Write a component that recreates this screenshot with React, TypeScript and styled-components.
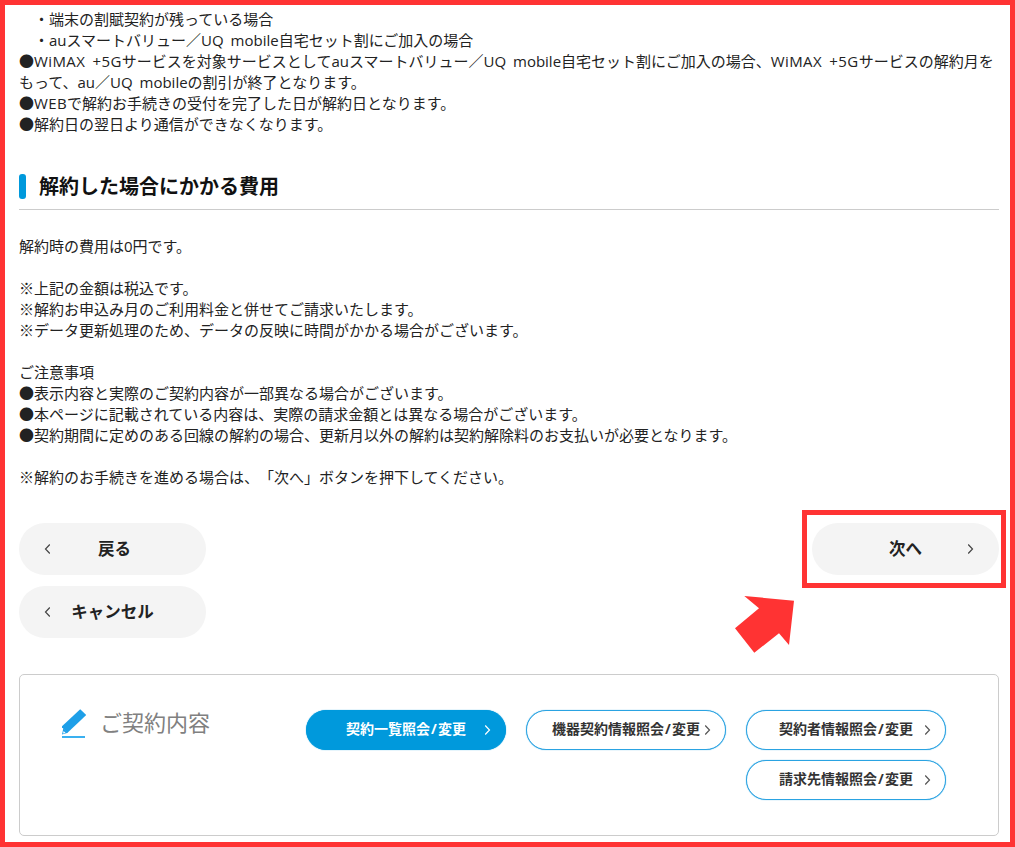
import React from "react";
import styled, { createGlobalStyle } from "styled-components";

const FONT = `"Open Sans", "Noto Sans CJK JP", "Liberation Sans", sans-serif`;

const Global = createGlobalStyle`
  html, body { margin: 0; padding: 0; background: #fff; }
  body { font-family: ${FONT}; color: #222; text-spacing-trim: space-all; }
`;
const Frame = styled.div`
  position: relative; box-sizing: border-box; width: 1015px; height: 847px;
  border: 5px solid #ff3333; padding: 4px 11px 0 14px; overflow: hidden;
  font-size: 15px; line-height: 21px;
`;
const Line = styled.p`margin: 0; min-height: 21px; white-space: pre; word-spacing: 3px;`;
const Wide = styled.span`letter-spacing: 0.4px;`;
const SectionHead = styled.div`
  display: flex; align-items: center; gap: 13px; margin-top: 39px; padding-bottom: 10px;
  border-bottom: 1px solid #ccc; height: 25px;
`;
const Bar = styled.span`width: 7px; height: 25px; border-radius: 3px; background: #0099dc;`;
const HeadText = styled.h2`margin: 0; font-size: 20px; font-weight: 700; line-height: 25px; color: #111;`;
const Body = styled.div`margin-top: 26px;`;
const Actions = styled.div`display: flex; justify-content: space-between; margin-top: 35px;`;
const BtnCol = styled.div`display: flex; flex-direction: column; gap: 11px;`;
const BigBtn = styled.button`
  position: relative; box-sizing: border-box; width: 187px; height: 52px; border: 0; border-radius: 26px;
  background: #f4f4f4; color: #222; font: 700 16.5px/50px ${FONT}; padding: 0; text-align: center;
`;
const BackLabel = styled.span`position: relative; left: 2px;`;
const Chev = styled.svg<{ $side: "left" | "right"; $off: number }>`
  position: absolute; top: 50%; transform: translateY(-50%);
  ${(p) => p.$side}: ${(p) => p.$off}px;
`;
const Panel = styled.section`
  box-sizing: border-box; margin-top: 36px; height: 162px; border: 1px solid #ccc; border-radius: 5px;
  display: flex; justify-content: space-between; padding: 35px 52px 0 42px;
`;
const PanelTitle = styled.div`display: flex; gap: 15px; align-items: flex-start; height: 32px; margin-top: -2px;`;
const TitleText = styled.span`font-size: 22px; line-height: 30px; font-weight: 400; color: #808080; position: relative; top: -1px; left: -1px;`;
const Pills = styled.div`
  display: flex; flex-wrap: wrap; justify-content: flex-end; align-content: flex-start; gap: 10px 20px; width: 640px;
`;
const Pill = styled.a<{ $on?: boolean }>`
  position: relative; box-sizing: border-box; width: 200px; height: 40px; border-radius: 20px;
  border: 1px solid ${(p) => (p.$on ? "#0099dc" : "#2aa3e2")};
  box-shadow: 0 0 1px ${(p) => (p.$on ? "#0099dc" : "#2aa3e2")};
  background: ${(p) => (p.$on ? "#0099dc" : "#fff")};
  color: ${(p) => (p.$on ? "#fff" : "#333")};
  font-size: 14px; font-weight: 700; line-height: 35px; text-align: center;
`;
const Slash = styled.span`padding: 0 1.2px;`;
const Highlight = styled.div`
  position: absolute; left: 797px; top: 505px; width: 204px; height: 78px; box-sizing: border-box;
  border: 5px solid #ff3333;
`;
const Arrow = styled.svg`position: absolute; left: 725px; top: 586px;`;

const Chevron = ({ side, off, color = "#444" }: { side: "left" | "right"; off: number; color?: string }) => (
  <Chev $side={side} $off={off} width="7" height="11" viewBox="0 0 7 11" fill="none">
    <path d={side === "right" ? "M1.2 1l4.3 4.5L1.2 10" : "M5.8 1L1.5 5.5 5.8 10"} stroke={color} strokeWidth="1.2" />
  </Chev>
);

const Pencil = () => (
  <svg width="24" height="30" viewBox="0 0 24 30">
    <path d="M19.7 1.3l6 5.7L7 24.7l-6-6z" fill="#1e9fe8" transform="translate(-1.5 0)" />
    <path d="M-.2 26.5L1.2 20l4.6 4.8z" fill="#1e9fe8" transform="translate(.2 0)" />
    <path d="M1 25.5l.6-2.6 2 2z" fill="#fff" />
    <rect x="0" y="28" width="23" height="2" fill="#3ab0f0" />
  </svg>
);

const bodyLines = [
  "解約時の費用は0円です。",
  "",
  "※上記の金額は税込です。",
  "※解約お申込み月のご利用料金と併せてご請求いたします。",
  "※データ更新処理のため、データの反映に時間がかかる場合がございます。",
  "",
  "ご注意事項",
  "●表示内容と実際のご契約内容が一部異なる場合がございます。",
  "●本ページに記載されている内容は、実際の請求金額とは異なる場合がございます。",
  "●契約期間に定めのある回線の解約の場合、更新月以外の解約は契約解除料のお支払いが必要となります。",
  "",
  "※解約のお手続きを進める場合は、「次へ」ボタンを押下してください。",
];

const pills = ["契約一覧照会", "機器契約情報照会", "契約者情報照会", "請求先情報照会"];

export default function App() {
  return (
    <>
      <Global />
      <Frame>
        <Line>　・端末の割賦契約が残っている場合</Line>
        <Line>　・auスマートバリュー／UQ mobile自宅セット割にご加入の場合</Line>
        <Line>
          ●<Wide>WiMAX +5G</Wide>サービスを対象サービスとしてauスマートバリュー／UQ mobile自宅セット割にご加入の場合、<Wide>WiMAX +5G</Wide>サービスの解約月を
        </Line>
        <Line>もって、au／UQ mobileの割引が終了となります。</Line>
        <Line>
          ●<Wide>WEB</Wide>で解約お手続きの受付を完了した日が解約日となります。
        </Line>
        <Line>●解約日の翌日より通信ができなくなります。</Line>
        <SectionHead>
          <Bar />
          <HeadText>解約した場合にかかる費用</HeadText>
        </SectionHead>
        <Body>
          {bodyLines.map((t, i) => (
            <Line key={i}>{t}</Line>
          ))}
        </Body>
        <Actions>
          <BtnCol>
            <BigBtn><BackLabel>戻る</BackLabel><Chevron side="left" off={25} /></BigBtn>
            <BigBtn>キャンセル<Chevron side="left" off={25} /></BigBtn>
          </BtnCol>
          <BigBtn>次へ<Chevron side="right" off={25} /></BigBtn>
        </Actions>
        <Panel>
          <PanelTitle>
            <Pencil />
            <TitleText>ご契約内容</TitleText>
          </PanelTitle>
          <Pills>
            {pills.map((t, i) => (
              <Pill key={t} $on={i === 0}>
                {t}<Slash>/</Slash>変更
                <Chevron side="right" off={14} color={i === 0 ? "#fff" : "#555"} />
              </Pill>
            ))}
          </Pills>
        </Panel>
        <Highlight />
        <Arrow width="70" height="70" viewBox="0 0 70 70">
          <path d="M19.3 5L69 9.7 64 54 54 42.3 29.3 61.7 10 37.3 34 17.3z" fill="#ff3333" transform="translate(-5 0)" />
        </Arrow>
      </Frame>
    </>
  );
}
